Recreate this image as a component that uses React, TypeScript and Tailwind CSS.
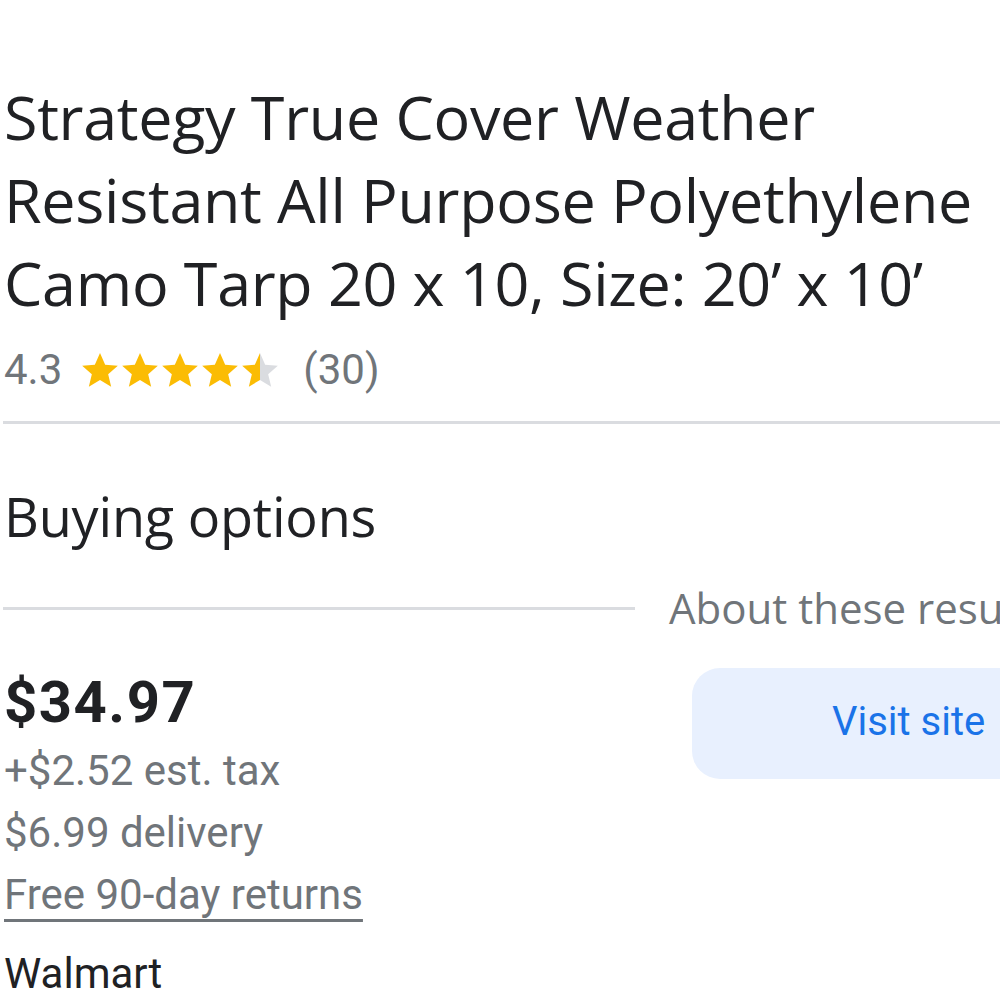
import React from "react";

function Star({ fill }: { fill: number }) {
  const id = `g${Math.round(fill * 100)}`;
  return (
    <svg width="40" height="40" viewBox="0 0 24 24" className="shrink-0">
      <defs>
        <linearGradient id={id} x1="0" x2="1" y1="0" y2="0">
          <stop offset={fill} stopColor="#fbbc04" />
          <stop offset={fill} stopColor="#dadce0" />
        </linearGradient>
      </defs>
      <path
        d="M12 1.8l3.1 7.1 7.6.6-5.8 5 1.8 7.5L12 18 5.3 22l1.8-7.5-5.8-5 7.6-.6z"
        fill={`url(#${id})`}
      />
    </svg>
  );
}

export default function App() {
  return (
    <div className="w-[1000px] h-[1000px] overflow-hidden bg-white" style={{ fontFamily: "Roboto, sans-serif" }}>
      <div className="pl-[4px] pt-[75px]">
        <h1
          className="text-[#202124] text-[61px] leading-[83px] tracking-[-0.3px] whitespace-nowrap"
          style={{ fontFamily: "'Open Sans', sans-serif" }}
        >
          Strategy True Cover Weather
          <br />
          Resistant All Purpose Polyethylene
          <br />
          Camo Tarp 20 x 10, Size: 20’ x 10’
        </h1>
        <div className="flex items-center mt-[21px] h-[50px]">
          <span className="text-[42px] leading-[50px] text-[#70757a]">4.3</span>
          <div className="flex items-center ml-[18px]">
            <Star fill={1} />
            <Star fill={1} />
            <Star fill={1} />
            <Star fill={1} />
            <Star fill={0.5} />
          </div>
          <span className="text-[42px] leading-[50px] text-[#70757a] ml-[23px]">(30)</span>
        </div>
      </div>
      <div className="ml-[3px] mt-[26px] h-[3px] bg-[#dadce0]" />
      <div className="pl-[4px] mt-[60px]">
        <h2
          className="text-[#202124] text-[54px] leading-[64px] tracking-[-0.2px]"
          style={{ fontFamily: "'Open Sans', sans-serif" }}
        >
          Buying options
        </h2>
      </div>
      <div className="flex w-[1400px] mt-[28px] h-[64px]">
        <div className="w-[632px] ml-[3px] shrink-0">
          <div className="h-[3px] bg-[#dadce0] mt-[31px]" />
        </div>
        <div className="pl-[34px] shrink-0 text-[42px] leading-[64px] text-[#70757a] whitespace-nowrap" style={{ fontFamily: "'Open Sans', sans-serif" }}>
          About these results
        </div>
      </div>
      <div className="flex w-[1400px] mt-[28px]">
        <div className="w-[692px] pl-[4px] shrink-0">
          <div className="mt-[2px] text-[58px] leading-[64px] font-bold text-[#202124] tracking-[1.5px]">
            $34.97
          </div>
          <div className="text-[42px] leading-[62px] text-[#70757a] mt-[6px]">+$2.52 est. tax</div>
          <div className="text-[42px] leading-[62px] text-[#70757a]">$6.99 delivery</div>
          <div className="text-[42px] leading-[62px] text-[#70757a] underline decoration-[3px] underline-offset-[10px] decoration-[#70757a]">
            Free 90-day returns
          </div>
          <div className="text-[42px] leading-[62px] text-[#202124] mt-[17px]">Walmart</div>
        </div>
        <div className="shrink-0">
          <div className="w-[500px] h-[111px] rounded-[28px] bg-[#e8f0fe] flex items-center pl-[140px] pb-[4px]">
            <span className="text-[40px] text-[#1a73e8]">Visit site</span>
          </div>
        </div>
      </div>
    </div>
  );
}
